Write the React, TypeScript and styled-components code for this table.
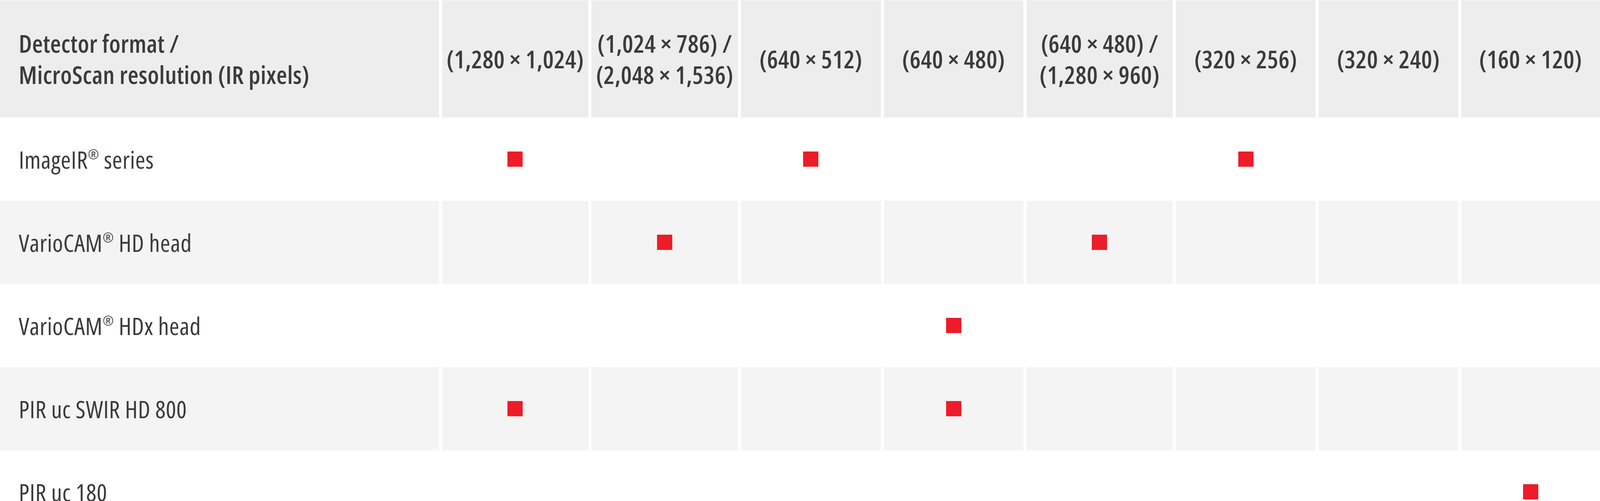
import React from 'react'
import styled, { createGlobalStyle, css } from 'styled-components'

const GlobalStyle = createGlobalStyle`
	html, body {
		margin: 0;
		padding: 0;
		background: #ffffff;
	}
	body {
		font-family: 'Open Sans', 'Noto Sans', sans-serif;
		color: #3b3b3b;
	}
`

const columns = [
	'(1,280 × 1,024)',
	['(1,024 × 786) /', '(2,048 × 1,536)'],
	'(640 × 512)',
	'(640 × 480)',
	['(640 × 480) /', '(1,280 × 960)'],
	'(320 × 256)',
	'(320 × 240)',
	'(160 × 120)',
]

// which resolution columns are ticked for each camera
const rows = [
	{ name: 'ImageIR', reg: true, rest: ' series', marks: [0, 2, 5] },
	{ name: 'VarioCAM', reg: true, rest: ' HD head', marks: [1, 4] },
	{ name: 'VarioCAM', reg: true, rest: ' HDx head', marks: [3] },
	{ name: 'PIR uc SWIR HD 800', reg: false, rest: '', marks: [0, 3] },
	{ name: 'PIR uc 180', reg: false, rest: '', marks: [7] },
]

export default function App() {
	return (
		<>
			<GlobalStyle />
			<Table>
				<Row $height={300}>
					<Cell $tone="head" $first>
						<HeadText>
							Detector format /
							<br />
							MicroScan resolution (IR pixels)
						</HeadText>
					</Cell>
					{columns.map((col, i) => (
						<Cell key={i} $tone="head">
							<HeadText>
								{Array.isArray(col) ? (
									<>
										{col[0]}
										<br />
										{col[1]}
									</>
								) : (
									col
								)}
							</HeadText>
						</Cell>
					))}
				</Row>
				{rows.map((row, r) => {
					const tone = r % 2 === 1 ? 'alt' : 'plain'
					return (
						<Row key={r} $height={213}>
							<Cell $tone={tone} $first>
								<BodyText>
									{row.name}
									{row.reg && <Reg>®</Reg>}
									{row.rest}
								</BodyText>
							</Cell>
							{columns.map((_, c) => (
								<Cell key={c} $tone={tone}>
									{row.marks.includes(c) && <Mark />}
								</Cell>
							))}
						</Row>
					)
				})}
			</Table>
		</>
	)
}

const Table = styled.div`
	display: flex;
	flex-direction: column;
	width: 100%;
	padding-top: 1px;
	overflow: hidden;
`

const gridTemplate = css`
	display: grid;
	grid-template-columns: 1376fr 459fr 459fr 438fr 437fr 459fr 438fr 437fr 435fr;
	column-gap: 8px;
`

const Row = styled.div<{ $height: number }>`
	${gridTemplate};
	height: ${({ $height }) => $height}px;
	flex-shrink: 0;
`

const tones = {
	head: '#ededed',
	alt: '#f4f4f4',
	plain: '#ffffff',
}

const Cell = styled.div<{ $tone: keyof typeof tones; $first?: boolean }>`
	display: flex;
	align-items: center;
	justify-content: ${({ $first }) => ($first ? 'flex-start' : 'center')};
	padding-left: ${({ $first }) => ($first ? '48px' : '0')};
	background: ${({ $tone }) => tones[$tone]};
	text-align: ${({ $first }) => ($first ? 'left' : 'center')};
	min-width: 0;
`

const HeadText = styled.div`
	font-size: 63px;
	font-weight: 600;
	font-stretch: 75%;
	line-height: 80px;
	letter-spacing: 0.5px;
	white-space: nowrap;
`

const BodyText = styled.div`
	font-size: 62px;
	font-weight: 400;
	font-stretch: 75%;
	letter-spacing: 0.6px;
	white-space: nowrap;
`

const Reg = styled.sup`
	font-size: 0.55em;
	vertical-align: 0.7em;
	line-height: 0;
`

const Mark = styled.span`
	display: block;
	width: 39px;
	height: 39px;
	background: #ed1c29;
`
